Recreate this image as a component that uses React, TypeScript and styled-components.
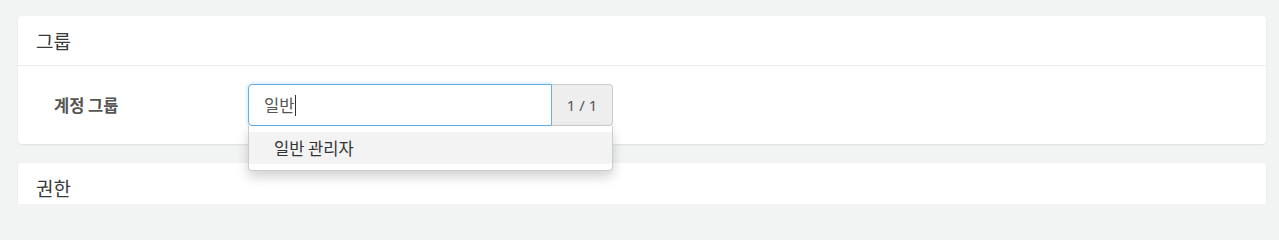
import React from "react";
import styled, { createGlobalStyle } from "styled-components";

const Global = createGlobalStyle`
  html, body {
    margin: 0;
    padding: 0;
    background: #f2f3f3;
    font-family: "Noto Sans CJK KR", "Noto Sans", sans-serif;
    color: #333;
  }
`;

export default function App() {
  return (
    <>
      <Global />
      <S.Page>
        <S.Card>
          <S.CardHeader>그룹</S.CardHeader>
          <S.CardBody>
            <S.Label>계정 그룹</S.Label>
            <S.Field>
              <S.InputGroup>
                <S.Input>
                  일반<S.Caret />
                </S.Input>
                <S.Addon>1 / 1</S.Addon>
              </S.InputGroup>
              <S.Menu>
                <S.MenuItem $active>일반 관리자</S.MenuItem>
              </S.Menu>
            </S.Field>
          </S.CardBody>
        </S.Card>
        <S.Card>
          <S.CardHeader>권한</S.CardHeader>
          <S.CardBody />
        </S.Card>
      </S.Page>
    </>
  );
}

const S = {
  Page: styled.div`
    display: flex;
    flex-direction: column;
    gap: 19px;
    padding: 16px 13px 0 18px;
    height: 204px;
    box-sizing: border-box;
    overflow: hidden;
  `,
  Card: styled.section`
    background: #fff;
    border-radius: 4px;
    box-shadow: 0 1px 2px rgba(0, 0, 0, 0.08);
    flex-shrink: 0;
  `,
  CardHeader: styled.h3`
    margin: 0;
    height: 49px;
    display: flex;
    align-items: center;
    padding: 0 18px;
    font-size: 19px;
    font-weight: 400;
    color: #3a3a3a;
    border-bottom: 1px solid #ebebeb;
  `,
  CardBody: styled.div`
    display: grid;
    grid-template-columns: 194px 365px;
    align-items: start;
    padding: 18px 36px;
    min-height: 42px;
  `,
  Label: styled.label`
    font-size: 16.5px;
    font-weight: 700;
    color: #555;
    line-height: 42px;
  `,
  Field: styled.div`
    position: relative;
  `,
  InputGroup: styled.div`
    display: flex;
    height: 42px;
  `,
  Input: styled.div`
    flex: 0 0 304px;
    box-sizing: border-box;
    display: flex;
    align-items: center;
    padding: 0 15px;
    font-size: 16.5px;
    color: #555;
    border: 1px solid #66afe9;
    border-radius: 4px 0 0 4px;
    box-shadow: 0 0 4px rgba(102, 175, 233, 0.45);
    background: #fff;
  `,
  Caret: styled.span`
    display: inline-block;
    width: 1px;
    height: 21px;
    background: #333;
    margin-left: 1px;
  `,
  Addon: styled.div`
    flex: 1;
    box-sizing: border-box;
    display: flex;
    align-items: center;
    justify-content: center;
    font-family: "Noto Sans", sans-serif;
    font-size: 15px;
    color: #555;
    background: #eee;
    border: 1px solid #ccc;
    border-left: none;
    border-radius: 0 4px 4px 0;
  `,
  Menu: styled.ul`
    position: absolute;
    left: 0;
    right: 0;
    top: 42px;
    margin: 0;
    padding: 6px 0;
    list-style: none;
    background: #fff;
    border: 1px solid #ccc;
    border-top: none;
    border-radius: 0 0 4px 4px;
    box-shadow: 0 6px 12px rgba(0, 0, 0, 0.175);
    z-index: 10;
  `,
  MenuItem: styled.li<{ $active?: boolean }>`
    height: 32px;
    display: flex;
    align-items: center;
    padding: 0 25px;
    font-size: 16.5px;
    color: #333;
    background: ${(p) => (p.$active ? "#f3f3f3" : "transparent")};
  `,
};
